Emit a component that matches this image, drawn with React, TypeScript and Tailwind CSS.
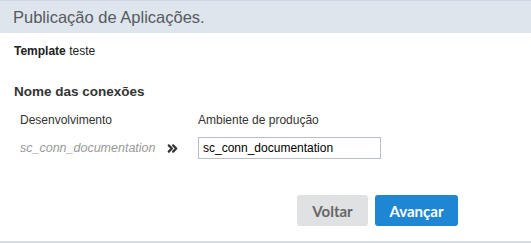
import { ChevronsRight } from "lucide-react";

const App = () => {
    return (
        <div className="w-[531px] h-[243px] bg-white flex flex-col font-['Liberation_Sans',Arial,sans-serif] border-b-2 border-[#d3dce4]">
            <div className="h-[33px] bg-[#dfe5ed] border-t border-[#cfd8e2] flex items-center pl-[13px]">
                <span className="text-[16.5px] text-[#555a60]">Publicação de Aplicações.</span>
            </div>
            <div className="px-[14px] pt-[9px] text-[12px] text-[#222]">
                <span className="font-bold">Template</span> teste
            </div>
            <div className="px-[14px] pt-[22px] text-[13.5px] font-bold text-[#333]">Nome das conexões</div>
            <div className="flex pl-[20px] pt-[9px] text-[12px] text-[#333]">
                <span className="w-[178px]">Desenvolvimento</span>
                <span>Ambiente de produção</span>
            </div>
            <div className="flex items-center pl-[20px] pt-[8px]">
                <span className="w-[145px] italic text-[12.5px] text-[#999]">sc_conn_documentation</span>
                <div className="w-[33px] flex">
                    <ChevronsRight size={15} strokeWidth={3.5} className="text-[#333]" />
                </div>
                <input
                    readOnly
                    value="sc_conn_documentation"
                    className="w-[183px] h-[22px] border border-[#b8bec6] px-[4px] text-[12px] text-black outline-none"
                />
            </div>
            <div className="flex justify-end gap-[7px] pr-[73px] pt-[36px] font-['Lato',sans-serif] font-bold text-[15px]">
                <button className="w-[71px] h-[31px] rounded-[3px] bg-[#e0e1e3] text-[#666]">Voltar</button>
                <button className="w-[83px] h-[31px] rounded-[3px] bg-[#1f86d3] text-white">Avançar</button>
            </div>
        </div>
    );
};

export default App;
